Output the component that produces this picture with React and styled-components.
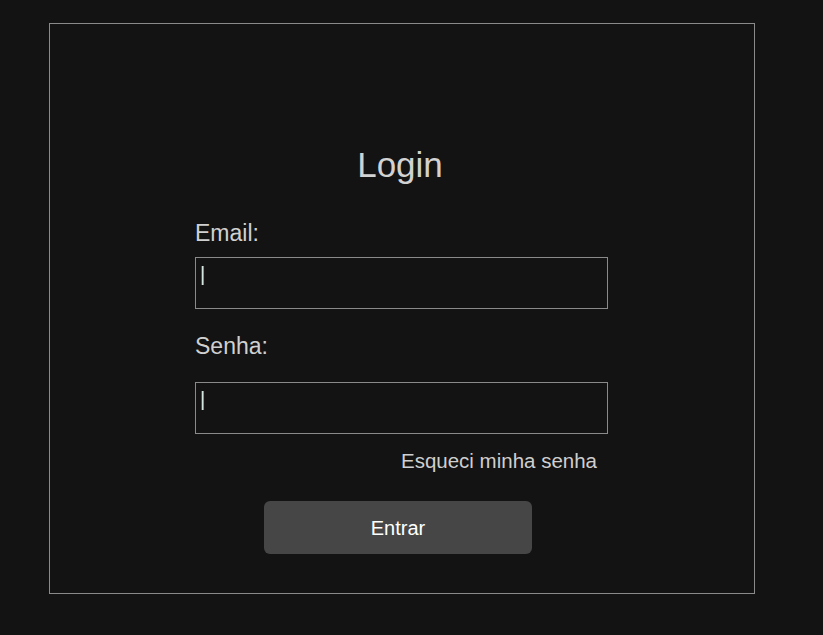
import React from 'react';
import styled, { createGlobalStyle } from 'styled-components';

const Global = createGlobalStyle`
  html, body {
    margin: 0;
    background: #131313;
    font-family: "Liberation Sans", Arial, sans-serif;
  }
`

const Page = styled.div`
  padding: 23px 0 0 49px;
  min-height: 635px;
  box-sizing: border-box;
`

const Card = styled.div`
  width: 706px;
  height: 571px;
  box-sizing: border-box;
  border: 1px solid #8a8a8a;
  display: flex;
  flex-direction: column;
  padding: 121px 0 0 145px;
`

const Form = styled.form`
  width: 413px;
  display: flex;
  flex-direction: column;
`

const Title = styled.h1`
  align-self: center;
  margin: 0 3px 35px 0;
  font-size: 35px;
  line-height: 40px;
  font-weight: 400;
  color: #d2d2d2;
`

const Label = styled.label`
  font-size: 23px;
  line-height: 26px;
  color: #d0d0d0;
  margin-bottom: ${p => p.gap}px;
`

const Field = styled.input`
  width: 100%;
  height: 52px;
  box-sizing: border-box;
  background: #131313;
  border: 1px solid #8a8a8a;
  border-radius: 0;
  padding: 0 4px 18px;
  font-family: inherit;
  font-size: 20px;
  color: #e6e6e6;
  outline: none;
  margin-bottom: ${p => p.gap}px;

  &::placeholder {
    color: #e6e6e6;
    opacity: 1;
  }
`

const Forgot = styled.a`
  align-self: flex-end;
  margin-right: 11px;
  font-size: 20.5px;
  line-height: 23px;
  color: #cfcfcf;
  text-decoration: none;
  cursor: pointer;
`

const Submit = styled.button`
  align-self: center;
  margin: 29px 7px 0 0;
  width: 268px;
  height: 53px;
  padding: 2px 0 0;
  border: none;
  border-radius: 6px;
  background: #464646;
  color: #ffffff;
  font-family: inherit;
  font-size: 20px;
  cursor: pointer;
`

export default function App() {
  return (
    <>
      <Global />
      <Page>
        <Card>
          <Form onSubmit={e => e.preventDefault()}>
            <Title>Login</Title>
            <Label htmlFor="email" gap={11}>Email:</Label>
            <Field id="email" type="email" placeholder="|" gap={24} />
            <Label htmlFor="senha" gap={23}>Senha:</Label>
            <Field id="senha" type="password" placeholder="|" gap={15} />
            <Forgot>Esqueci minha senha</Forgot>
            <Submit type="submit">Entrar</Submit>
          </Form>
        </Card>
      </Page>
    </>
  );
}
